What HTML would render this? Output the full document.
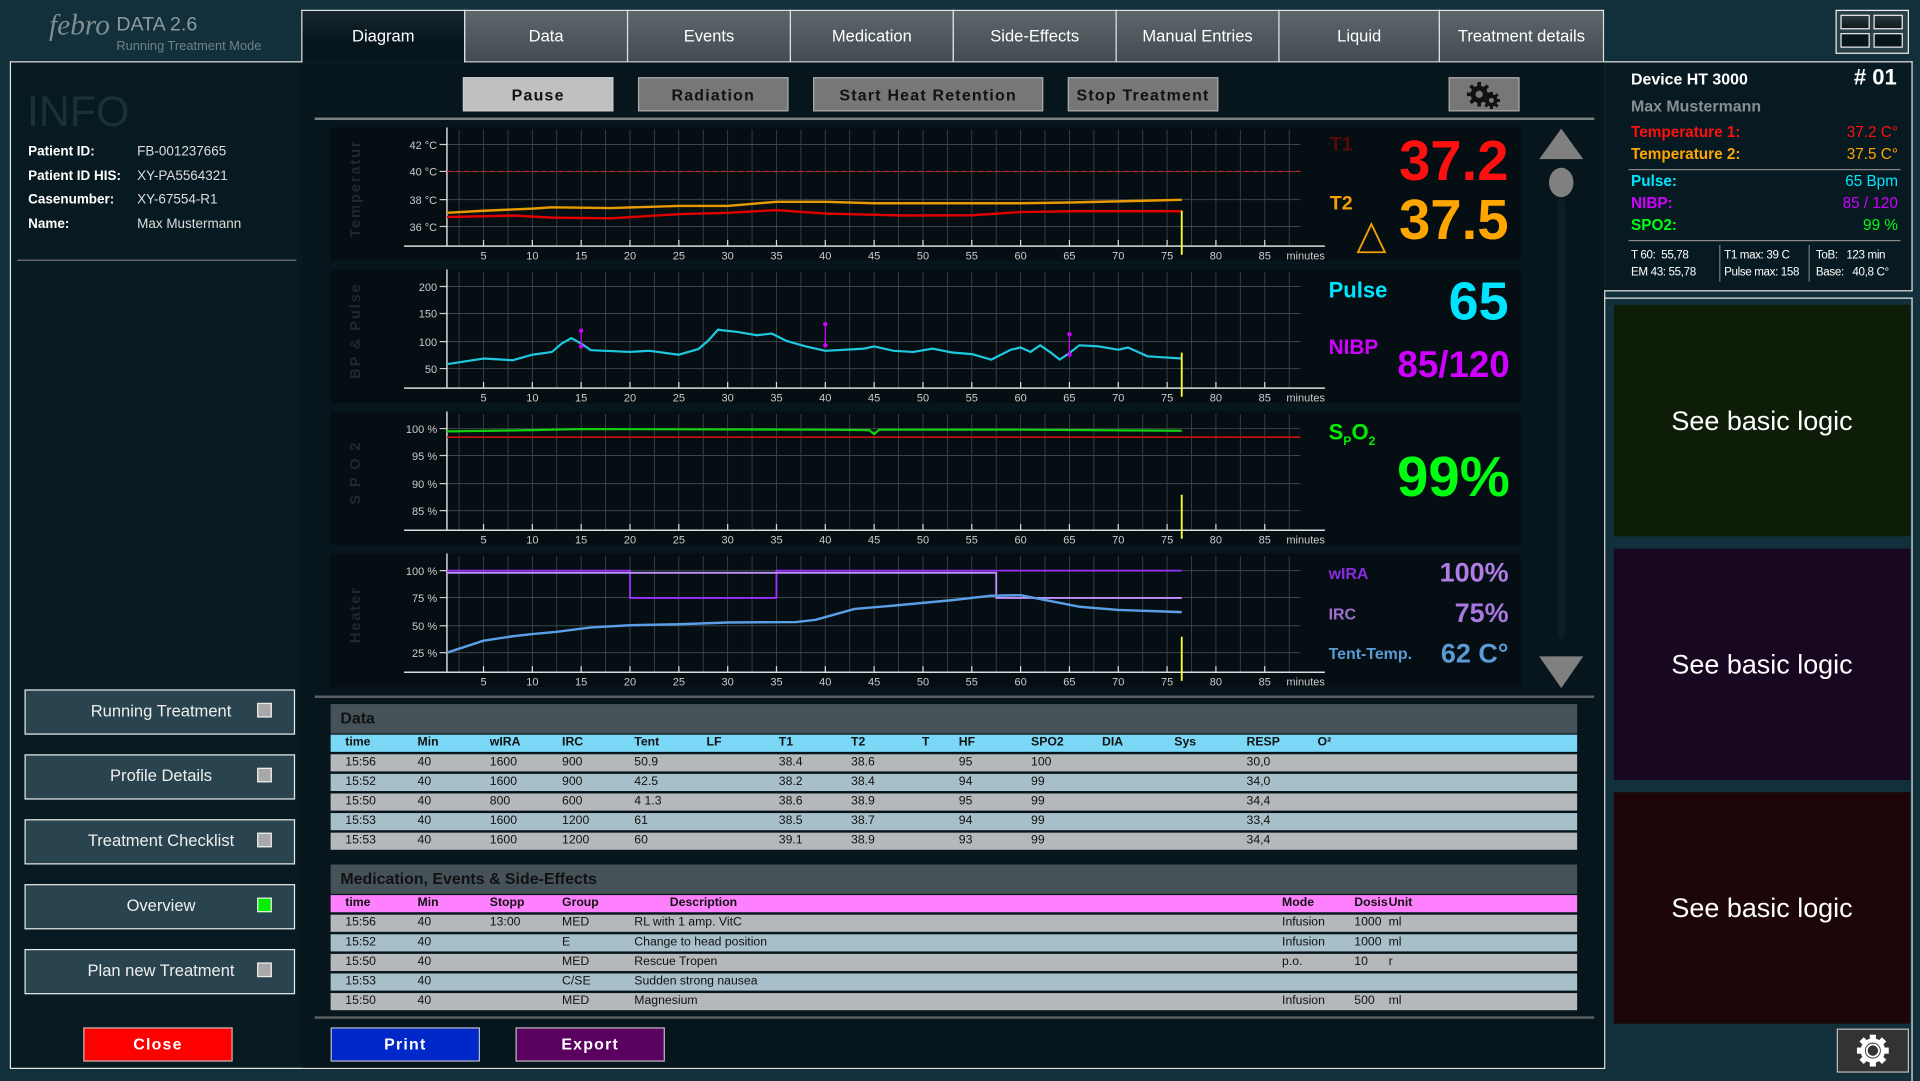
<!DOCTYPE html>
<html><head><meta charset="utf-8">
<style>
*{margin:0;padding:0;box-sizing:border-box}
body{width:1920px;height:1080px;overflow:hidden;background:#12303b;font-family:"Liberation Sans",sans-serif}
#w{position:absolute;left:0;top:0;width:1568px;height:882px;transform:scale(1.22449);transform-origin:0 0;background:#12303b}
.a{position:absolute}
.n{font-family:"Liberation Sans Narrow","Liberation Sans",sans-serif}
.tab{position:absolute;top:8px;height:42px;border:1px solid #e0e0e0;border-bottom:none;background:linear-gradient(#5d676b,#434c50);color:#fff;font-size:13.5px;text-align:center;line-height:42px}
.btn{position:absolute;top:63px;height:28px;border:1px solid #aaa;background:#777;color:#111;font-weight:bold;font-size:13px;letter-spacing:1px;text-align:center;line-height:27px}
.lb{position:absolute;left:20px;width:221px;height:37px;border:1.5px solid #e8e8e8;background:#29444e;color:#eee;font-size:13.5px;line-height:34px;padding-left:0}
.lb span{position:absolute;left:0;width:221px;text-align:center}
.lb i{position:absolute;left:189px;top:10px;width:12px;height:12px;background:#a8a8a8;border:1.5px solid #eee}
.chart{position:absolute;left:270px;width:972px;height:109px;background:#050e12}
.tbl{position:absolute;left:270px;width:1018px}
.row{position:absolute;left:0;width:1018px;height:14px;font-size:10px;color:#111;line-height:14px}
.row span{position:absolute}
.pl{position:absolute;font-size:11px;font-weight:bold;color:#fff}
.pv{position:absolute;font-size:11px;color:#ddd}
.ri{position:absolute;font-size:12.5px;font-weight:bold}
.sb{position:absolute;left:1318px;width:242px;height:189px;color:#fff;font-size:22px;text-align:center;line-height:189px}
.st{position:absolute;font-size:9.5px;color:#fff;line-height:14px;letter-spacing:-0.3px;white-space:nowrap}
</style></head><body><div id="w">

<!-- logo -->
<div class="a" style="left:40px;top:8px;font-family:'Liberation Serif',serif;font-style:italic;font-size:24px;color:#7d8e94">febro</div>
<div class="a n" style="left:95px;top:12px;font-size:16px;color:#8c9ca2">DATA 2.6</div>
<div class="a n" style="left:95px;top:32px;font-size:10.5px;color:#6f8288">Running Treatment Mode</div>

<!-- main frame -->
<div class="a" style="left:8px;top:50px;width:1303px;height:823px;border:1px solid #e6e6e6;background:#081a21"></div>
<div class="a" style="left:247px;top:51px;width:1063px;height:821px;background:#06161c"></div>

<!-- tabs -->
<div class="tab" style="left:246px;width:134px;background:linear-gradient(#17262c,#06161c 60%);height:43px">Diagram</div>
<div class="tab" style="left:379px;width:134px">Data</div>
<div class="tab" style="left:512px;width:134px">Events</div>
<div class="tab" style="left:645px;width:134px">Medication</div>
<div class="tab" style="left:778px;width:134px">Side-Effects</div>
<div class="tab" style="left:911px;width:134px">Manual Entries</div>
<div class="tab" style="left:1044px;width:132px">Liquid</div>
<div class="tab" style="left:1175px;width:135px">Treatment details</div>

<!-- left panel -->
<div class="a" style="left:22px;top:72px;font-size:35px;color:#1b313a">INFO</div>
<div class="pl" style="left:23px;top:118px">Patient ID:</div><div class="pv" style="left:112px;top:118px">FB-001237665</div>
<div class="pl" style="left:23px;top:138px">Patient ID HIS:</div><div class="pv" style="left:112px;top:138px">XY-PA5564321</div>
<div class="pl" style="left:23px;top:157px">Casenumber:</div><div class="pv" style="left:112px;top:157px">XY-67554-R1</div>
<div class="pl" style="left:23px;top:177px">Name:</div><div class="pv" style="left:112px;top:177px">Max Mustermann</div>
<div class="a" style="left:14px;top:212px;width:228px;height:1px;background:#777"></div>

<div class="lb" style="top:563px"><span>Running Treatment</span><i></i></div>
<div class="lb" style="top:616px"><span>Profile Details</span><i></i></div>
<div class="lb" style="top:669px"><span>Treatment Checklist</span><i></i></div>
<div class="lb" style="top:722px"><span>Overview</span><i style="background:#00ee00"></i></div>
<div class="lb" style="top:775px"><span>Plan new Treatment</span><i></i></div>
<div class="a" style="left:68px;top:839px;width:122px;height:28px;background:#ff0000;border:1px solid #bbb;color:#fff;font-weight:bold;font-size:13px;letter-spacing:1px;text-align:center;line-height:26px">Close</div>

<!-- buttons -->
<div class="btn" style="left:378px;width:123px;background:#c0c0c0;border-color:#ccc">Pause</div>
<div class="btn" style="left:521px;width:123px">Radiation</div>
<div class="btn" style="left:664px;width:188px">Start Heat Retention</div>
<div class="btn" style="left:872px;width:123px">Stop Treatment</div>
<div class="btn" style="left:1183px;width:58px;font-size:0">
<svg width="58" height="28" viewBox="0 0 58 28"><g fill="#111"><circle cx="24" cy="13" r="7"/><circle cx="34" cy="18" r="5"/></g><g stroke="#111" stroke-width="3"><path d="M24 3v20M14 13h20M17 6l14 14M31 6l-14 14"/><path d="M34 11v14M27 18h14M29 13l10 10M39 13l-10 10" stroke-width="2.4"/></g><circle cx="24" cy="13" r="3" fill="#777"/><circle cx="34" cy="18" r="2" fill="#777"/></svg></div>
<div class="a" style="left:257px;top:96px;width:1045px;height:2px;background:#7a7f80"></div>

<!-- charts -->
<div class="chart" style="top:104px"><svg id="c1" width="972" height="109"></svg></div>
<div class="chart" style="top:220px"><svg id="c2" width="972" height="109"></svg></div>
<div class="chart" style="top:336px"><svg id="c3" width="972" height="109"></svg></div>
<div class="chart" style="top:452px"><svg id="c4" width="972" height="109"></svg></div>

<!-- readouts -->
<div class="a" style="left:1086px;top:110px;font-size:16px;font-weight:bold;color:#5a0808">T1</div>
<div class="a" style="left:1120px;top:104px;width:112px;text-align:right;font-size:46px;font-weight:bold;color:#ff1010">37.2</div>
<div class="a" style="left:1086px;top:158px;font-size:16px;font-weight:bold;color:#f5a000">T2</div>
<div class="a" style="left:1120px;top:152px;width:112px;text-align:right;font-size:46px;font-weight:bold;color:#ffa500">37.5</div>
<svg class="a" style="left:1106px;top:180px" width="28" height="28"><path d="M14 3L3 26H25Z" fill="none" stroke="#f5a000" stroke-width="1.5"/></svg>

<div class="a" style="left:1085px;top:227px;font-size:18px;font-weight:bold;color:#00e5ff">Pulse</div>
<div class="a" style="left:1120px;top:222px;width:112px;text-align:right;font-size:44px;font-weight:bold;color:#00e5ff">65</div>
<div class="a" style="left:1085px;top:274px;font-size:17px;font-weight:bold;color:#d000ff">NIBP</div>
<div class="a" style="left:1100px;top:282px;width:133px;text-align:right;font-size:30px;font-weight:bold;color:#d000ff">85/120</div>

<div class="a" style="left:1085px;top:343px;font-size:18px;font-weight:bold;color:#00ee00">S<sub style="font-size:10px">P</sub>O<sub style="font-size:10px">2</sub></div>
<div class="a" style="left:1100px;top:362px;width:133px;text-align:right;font-size:46px;font-weight:bold;color:#00ff10">99%</div>

<div class="a" style="left:1085px;top:461px;font-size:13px;font-weight:bold;color:#8a2be2">wIRA</div>
<div class="a" style="left:1130px;top:455px;width:102px;text-align:right;font-size:22px;font-weight:bold;color:#b07ce6">100%</div>
<div class="a" style="left:1085px;top:494px;font-size:13px;font-weight:bold;color:#a070d0">IRC</div>
<div class="a" style="left:1130px;top:488px;width:102px;text-align:right;font-size:22px;font-weight:bold;color:#a878e0">75%</div>
<div class="a" style="left:1085px;top:526px;font-size:13px;font-weight:bold;color:#5b9bd5">Tent-Temp.</div>
<div class="a" style="left:1130px;top:521px;width:102px;text-align:right;font-size:22px;font-weight:bold;color:#5b9bd5">62 C°</div>

<!-- scroll -->
<svg class="a" style="left:1255px;top:102px" width="40" height="465"><path d="M20 3L38 28H2Z" fill="#808080"/><ellipse cx="20" cy="47" rx="10" ry="12" fill="#808080"/><rect x="17" y="60" width="6" height="360" rx="3" fill="#0c1f26"/><path d="M20 460L38 434H2Z" fill="#808080"/></svg>
<div class="a" style="left:257px;top:568px;width:1045px;height:2px;background:#5a6264"></div>

<!-- data table -->
<div class="tbl" style="top:575px;height:24px;background:#455359"><span class="a n" style="left:8px;top:4px;font-size:13px;font-weight:bold;color:#111">Data</span></div>
<div class="row n" style="left:270px;top:600px;background:#7ad8f6;font-weight:bold" id="dh"></div>
<div id="drows"></div>
<div class="tbl" style="top:706px;height:24px;background:#455359"><span class="a n" style="left:8px;top:4px;font-size:13px;font-weight:bold;color:#111">Medication, Events &amp; Side-Effects</span></div>
<div class="row n" style="left:270px;top:731px;background:#ff80ff;font-weight:bold" id="mh"></div>
<div id="mrows"></div>
<div class="a" style="left:257px;top:830px;width:1045px;height:2px;background:#5a6264"></div>

<div class="a" style="left:270px;top:839px;width:122px;height:28px;background:#0028c8;border:1px solid #bbb;color:#fff;font-weight:bold;font-size:13px;letter-spacing:1px;text-align:center;line-height:26px">Print</div>
<div class="a" style="left:421px;top:839px;width:122px;height:28px;background:#5a005f;border:1px solid #bbb;color:#fff;font-weight:bold;font-size:13px;letter-spacing:1px;text-align:center;line-height:26px">Export</div>

<!-- top right layout icon -->
<div class="a" style="left:1499px;top:8px;width:60px;height:36px;border:1.5px solid #eee;background:#2a4048">
<div class="a" style="left:3px;top:3px;width:24px;height:12px;border:1.5px solid #eee;background:linear-gradient(#2a3a3e,#10181b)"></div>
<div class="a" style="left:30px;top:3px;width:24px;height:12px;border:1.5px solid #eee;background:linear-gradient(#2a3a3e,#10181b)"></div>
<div class="a" style="left:3px;top:18px;width:24px;height:12px;border:1.5px solid #eee;background:#07161b"></div>
<div class="a" style="left:30px;top:18px;width:24px;height:12px;border:1.5px solid #eee;background:#07161b"></div>
</div>

<!-- right info panel -->
<div class="a" style="left:1310px;top:50px;width:252px;height:188px;border:1px solid #e6e6e6;border-left:none;background:#081a21"></div>
<div class="a n" style="left:1332px;top:57px;font-size:13px;font-weight:bold;color:#fff">Device HT 3000</div>
<div class="a n" style="left:1500px;top:53px;width:49px;text-align:right;font-size:18px;font-weight:bold;color:#fff"># 01</div>
<div class="a n" style="left:1332px;top:79px;font-size:13px;font-weight:bold;color:#8a8f91">Max Mustermann</div>
<div class="ri n" style="left:1332px;top:101px;color:#ff1010">Temperature 1:</div><div class="ri n" style="left:1450px;width:100px;text-align:right;top:101px;color:#ff1010;font-weight:normal">37.2 C°</div>
<div class="ri n" style="left:1332px;top:119px;color:#ffa500">Temperature 2:</div><div class="ri n" style="left:1450px;width:100px;text-align:right;top:119px;color:#ffa500;font-weight:normal">37.5 C°</div>
<div class="a" style="left:1330px;top:138px;width:222px;height:1px;background:#888"></div>
<div class="ri n" style="left:1332px;top:141px;color:#00e5ff">Pulse:</div><div class="ri n" style="left:1450px;width:100px;text-align:right;top:141px;color:#00e5ff;font-weight:normal">65 Bpm</div>
<div class="ri n" style="left:1332px;top:159px;color:#d000ff">NIBP:</div><div class="ri n" style="left:1450px;width:100px;text-align:right;top:159px;color:#d000ff;font-weight:normal">85 / 120</div>
<div class="ri n" style="left:1332px;top:177px;color:#00ff10">SPO2:</div><div class="ri n" style="left:1450px;width:100px;text-align:right;top:177px;color:#00ff10;font-weight:normal">99 %</div>
<div class="a" style="left:1330px;top:196px;width:222px;height:1px;background:#888"></div>
<div class="st" style="left:1332px;top:202px">T 60:&nbsp;&nbsp;55,78<br>EM 43: 55,78</div>
<div class="a" style="left:1404px;top:200px;width:1px;height:30px;background:#777"></div>
<div class="st" style="left:1408px;top:202px">T1 max: 39 C<br>Pulse max: 158</div>
<div class="a" style="left:1477px;top:200px;width:1px;height:30px;background:#777"></div>
<div class="st" style="left:1483px;top:202px">ToB:&nbsp;&nbsp;&nbsp;123 min<br>Base:&nbsp;&nbsp;&nbsp;40,8 C°</div>

<div class="a" style="left:1310px;top:243px;width:252px;height:640px;border:1px solid #e6e6e6;border-bottom:none;border-left:none"></div>
<div class="sb" style="top:249px;background:#0d1d07">See basic logic</div>
<div class="sb" style="top:448px;background:#170720">See basic logic</div>
<div class="sb" style="top:647px;background:#1c0608">See basic logic</div>

<div class="a" style="left:1500px;top:840px;width:59px;height:36px;background:#333;border:1px solid #bbb">
<svg width="57" height="34" viewBox="0 0 57 34"><g transform="translate(28.5 17)"><g fill="#fff"><circle r="10"/><rect x="-2.5" y="-13" width="5" height="26"/><rect x="-2.5" y="-13" width="5" height="26" transform="rotate(45)"/><rect x="-2.5" y="-13" width="5" height="26" transform="rotate(90)"/><rect x="-2.5" y="-13" width="5" height="26" transform="rotate(135)"/></g><circle r="6.5" fill="#333"/><circle r="5" fill="none" stroke="#fff" stroke-width="1.5"/></g></svg></div>

</div>
<script>
function X(m){return 85+7.975*m}
function chart(id,label,ylab,extra){
 var s='';
 for(var m=2.5;m<=87.6;m+=2.5){s+='<line x1="'+X(m)+'" y1="2" x2="'+X(m)+'" y2="97" stroke="#3c4548" stroke-width="0.7"/>';}
 var ys=[14,36,59,81];
 for(var i=0;i<4;i++){s+='<line x1="95" y1="'+ys[i]+'" x2="792" y2="'+ys[i]+'" stroke="#3c4548" stroke-width="0.8"/>';
  s+='<line x1="89" y1="'+ys[i]+'" x2="95" y2="'+ys[i]+'" stroke="#ccc"/>';
  s+='<text x="87" y="'+(ys[i]+3.5)+'" text-anchor="end" font-size="9" fill="#ccc" font-family="Liberation Sans Narrow,Liberation Sans,sans-serif">'+ylab[i]+'</text>';}
 s+='<line x1="95" y1="0" x2="95" y2="97" stroke="#ddd" stroke-width="1.2"/>';
 s+='<line x1="60" y1="97" x2="812" y2="97" stroke="#ddd" stroke-width="1.2"/>';
 for(var m=5;m<=85;m+=5){s+='<line x1="'+X(m)+'" y1="92" x2="'+X(m)+'" y2="97" stroke="#ddd"/>';
  s+='<text x="'+X(m)+'" y="108" text-anchor="middle" font-size="9" fill="#ccc" font-family="Liberation Sans Narrow,Liberation Sans,sans-serif">'+m+'</text>';}
 s+='<text x="812" y="108" text-anchor="end" font-size="9" fill="#ccc" font-family="Liberation Sans Narrow,Liberation Sans,sans-serif">minutes</text>';
 s+='<text transform="translate(24 50) rotate(-90)" text-anchor="middle" font-size="12" font-weight="bold" letter-spacing="1.5" fill="#1d2a2e" font-family="Liberation Sans,sans-serif">'+label+'</text>';
 s+=extra;
 document.getElementById(id).innerHTML=s;
}
function pl(pts,fy,col,w){var d='';for(var i=0;i<pts.length;i+=2){d+=X(pts[i]).toFixed(1)+','+fy(pts[i+1]).toFixed(1)+' ';}
 return '<polyline points="'+d+'" fill="none" stroke="'+col+'" stroke-width="'+(w||2)+'" stroke-linejoin="round"/>';}
var E=76.5;
var yl='<line x1="'+X(E)+'" y1="68" x2="'+X(E)+'" y2="104" stroke="#ffff30" stroke-width="1.5"/>';
var ft=function(t){return 81-(t-36)*11.2};
chart('c1','Temperatur',['42 °C','40 °C','38 °C','36 °C'],
 '<line x1="95" y1="36" x2="792" y2="36" stroke="#d02020" stroke-dasharray="4,3"/>'+
 pl([1.25,37.0,5,37.15,10,37.3,12,37.4,18,37.35,25,37.5,30,37.5,35,37.8,40,37.8,45,37.7,60,37.7,65,37.75,E,37.95],ft,'#e89a00',2)+
 pl([1.25,36.7,5,36.75,8,36.8,12,36.65,18,36.6,25,36.9,30,37.0,35,37.2,40,36.95,48,36.8,55,36.82,60,37.05,65,37.12,E,37.12],ft,'#e00000',2)+yl);
var fp=function(v){return 81-(v-50)*0.4533};
var pin=function(m,a,b){return '<line x1="'+X(m)+'" y1="'+fp(a)+'" x2="'+X(m)+'" y2="'+fp(b)+'" stroke="#d000ff"/><circle cx="'+X(m)+'" cy="'+fp(b)+'" r="1.8" fill="#d000ff"/><circle cx="'+X(m)+'" cy="'+fp(a)+'" r="1.8" fill="#d000ff"/>';};
chart('c2','BP &amp; Pulse',['200','150','100','50'],
 pl([1.25,58,5,68,8,65,10,75,12,80,13,95,14,105,15,95,16,83,20,80,22,82,25,75,27,85,28,100,29,120,31,116,33,110,34.5,113,36,100,38,90,40,82,42,84,44,86,45,90,47,82,49,80,51,86,53,79,55,76,57,66,59,84,60,88,61,80,62,92,63,80,64,66,65,78,66,92,68,90,70,84,71,88,73,72,E,68],fp,'#1ec8e0',1.8)+
 pin(15,90,118)+pin(40,92,130)+pin(65,75,112)+yl);
var fs=function(v){return 14+(100-v)*4.5};
chart('c3','S P O 2',['100 %','95 %','90 %','85 %'],
 '<line x1="95" y1="21" x2="792" y2="21" stroke="#d01010" stroke-width="1.3"/>'+
 pl([1.25,99.5,10,99.7,15,99.9,40,99.8,44.5,99.7,45,99,45.5,99.8,60,99.8,E,99.6],fs,'#10d010',1.8)+yl);
var fh=function(v){return 14+(100-v)*0.893};
chart('c4','Heater',['100 %','75 %','50 %','25 %'],
 pl([1.25,100,20,100,20,75,35,75,35,100,E,100],fh,'#9b30ff',1.5)+
 pl([1.25,98,57.5,98,57.5,75,E,75],fh,'#c090ff',1.5)+
 pl([1.25,25,5,36,8,40,10,42,12.5,44,16,48,20,50,25,51,30,52.5,37,53,39,55,43,65,47,68,53,73,57,77,60,77.5,62,74,66,67,70,64,E,62],fh,'#5a9ee6',2)+yl);

var dc=[12,71,130,189,248,307,366,425,483,513,572,630,689,748,806];
var dh=['time','Min','wIRA','IRC','Tent','LF','T1','T2','T','HF','SPO2','DIA','Sys','RESP','O²'];
var h='';for(var i=0;i<dh.length;i++)h+='<span style="left:'+dc[i]+'px">'+dh[i]+'</span>';
document.getElementById('dh').innerHTML=h;
var dr=[['15:56','40','1600','900','50.9','','38.4','38.6','','95','100','','','30,0',''],
['15:52','40','1600','900','42.5','','38.2','38.4','','94','99','','','34,0',''],
['15:50','40','800','600','4 1.3','','38.6','38.9','','95','99','','','34,4',''],
['15:53','40','1600','1200','61','','38.5','38.7','','94','99','','','33,4',''],
['15:53','40','1600','1200','60','','39.1','38.9','','93','99','','','34,4','']];
var out='';for(var r=0;r<5;r++){out+='<div class="row n" style="left:270px;top:'+(616+r*16)+'px;background:'+(r%2?'#a7bfc9':'#b5b8ba')+'">';
 for(var i=0;i<15;i++)out+='<span style="left:'+dc[i]+'px">'+dr[r][i]+'</span>';out+='</div>';}
document.getElementById('drows').innerHTML=out;
var mc=[12,71,130,189,248,777,836,864];
var mhh=['time','Min','Stopp','Group','','Mode','Dosis','Unit'];
h='';for(var i=0;i<mhh.length;i++)h+='<span style="left:'+mc[i]+'px">'+mhh[i]+'</span>';
h+='<span style="left:277px">Description</span>';
document.getElementById('mh').innerHTML=h;
var mr=[['15:56','40','13:00','MED','RL with 1 amp. VitC','Infusion','1000','ml'],
['15:52','40','','E','Change to head position','Infusion','1000','ml'],
['15:50','40','','MED','Rescue Tropen','p.o.','10','r'],
['15:53','40','','C/SE','Sudden strong nausea','','',''],
['15:50','40','','MED','Magnesium','Infusion','500','ml']];
out='';for(var r=0;r<5;r++){out+='<div class="row n" style="left:270px;top:'+(747+r*16)+'px;background:'+(r%2?'#a7bfc9':'#b5b8ba')+'">';
 for(var i=0;i<8;i++)out+='<span style="left:'+mc[i]+'px">'+mr[r][i]+'</span>';out+='</div>';}
document.getElementById('mrows').innerHTML=out;
</script>
</body></html>
